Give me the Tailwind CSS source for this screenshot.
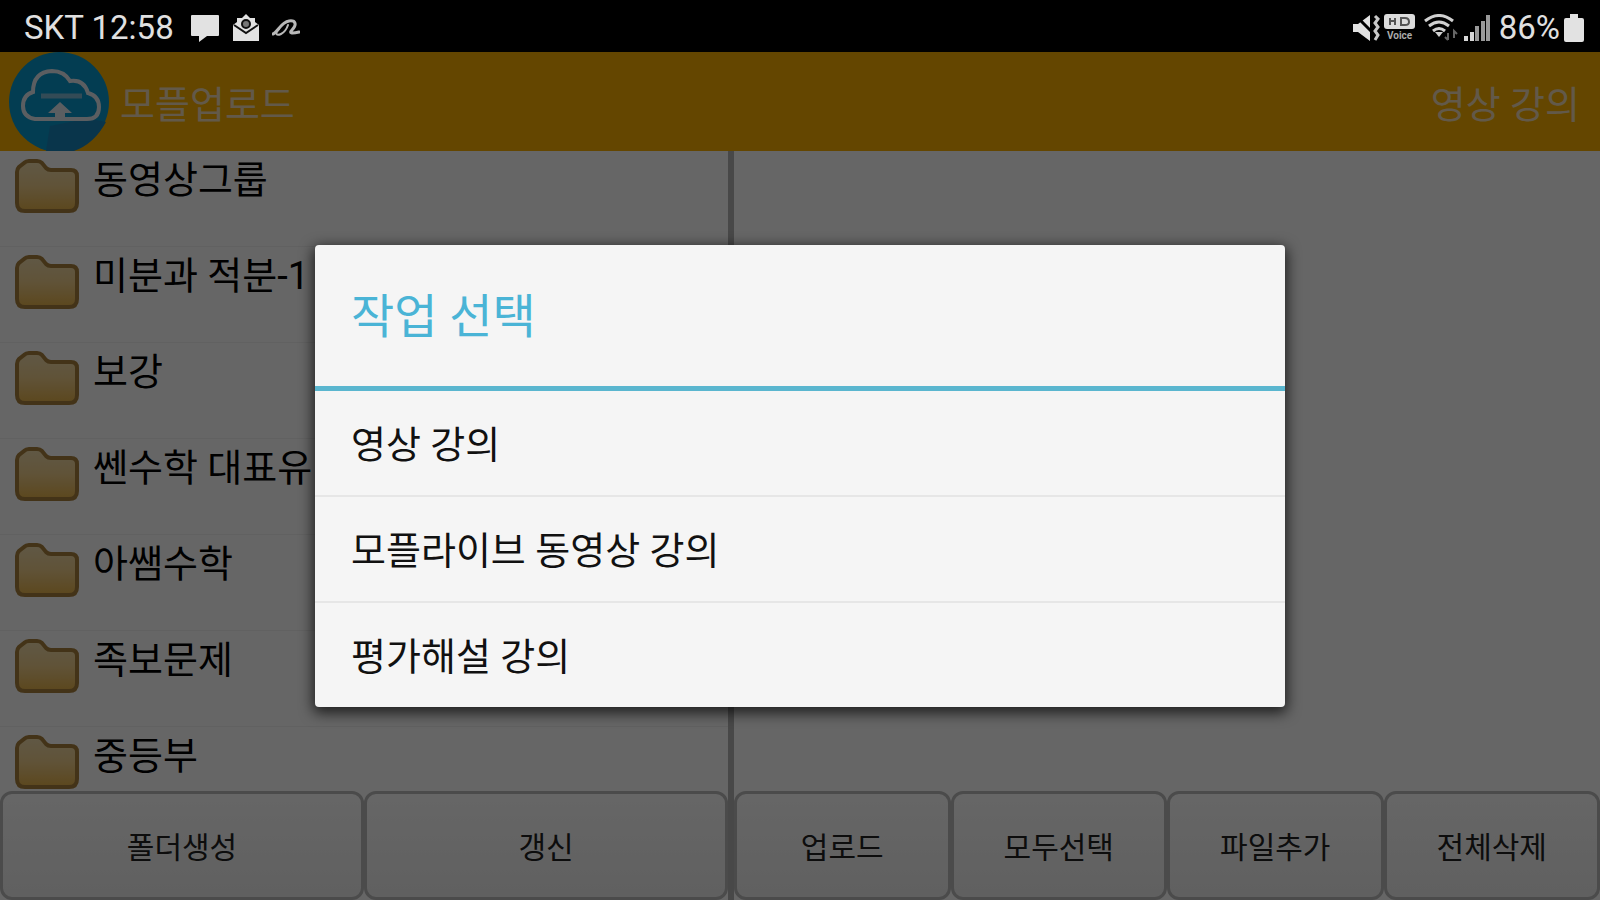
<!doctype html>
<html lang="ko">
  <head>
    <meta charset="UTF-8" />
    <meta name="viewport" content="width=device-width, initial-scale=1.0" />
    <title>모플업로드</title>
    <script src="https://cdn.jsdelivr.net/npm/@tailwindcss/browser@4"></script>
  </head>
  <body class="flex flex-col h-screen overflow-hidden bg-black font-[Roboto,'Noto_Sans_CJK_KR',sans-serif]">
    <!-- icons shared by the rows -->
    <svg class="absolute w-0 h-0">
      <defs>
        <linearGradient id="folder-fill" x1="0" y1="0" x2="0" y2="1">
          <stop offset="0" stop-color="#f0dcae" />
          <stop offset="0.5" stop-color="#f0cf8c" />
          <stop offset="1" stop-color="#e6b24a" />
        </linearGradient>
        <symbol id="folder" viewBox="0 0 64 54">
          <path
            d="M2 44V13Q2 10 4 8L9 4Q11 2 14 2H22Q25 2 27 4L31 9Q33 11 36 11H56Q62 11 62 17V44Q62 52 54 52H10Q2 52 2 44Z"
            fill="url(#folder-fill)"
            stroke="#a8803c"
            stroke-width="4"
          />
        </symbol>
      </defs>
    </svg>

    <div class="flex items-center justify-between h-[52px] shrink-0 pt-1 pl-6 pr-4 text-[#e0e0e0] text-[33px]">
      <div class="flex items-center gap-3">
        <span class="mr-1">SKT 12:58</span>
        <svg class="w-[30px] h-7" viewBox="0 0 30 28" fill="#e2e2e2">
          <path d="M2 1H28Q29 1 29 2V21Q29 22 28 22H17L9 28V22H2Q1 22 1 21V2Q1 1 2 1Z" />
        </svg>
        <svg class="w-7 h-7" viewBox="0 0 28 28">
          <path d="M1 11L5 8V4H10L14 0L18 4H23V8L27 11V27H1Z" fill="#e2e2e2" />
          <path d="M2 11L14 19L26 11" fill="none" stroke="#111" stroke-width="2" />
          <circle cx="14" cy="10" r="4" fill="#777" stroke="#111" stroke-width="2" />
        </svg>
        <svg class="w-7 h-7" viewBox="0 0 28 28" fill="none" stroke="#b8b8b8" stroke-width="2" stroke-linecap="round">
          <path d="M1 20C6 18 9 8 17 7C24 6 25 11 20 16C17 19 19 20 27 18" stroke-width="3" />
          <path d="M7 15C2 20 5 22 9 20C13 18 15 14 16 11" />
        </svg>
      </div>
      <div class="flex items-center gap-1">
        <svg class="w-7 h-7" viewBox="0 0 28 28" fill="#e2e2e2">
          <path d="M1 10H6L18 1V27L6 18H1Z" />
          <path d="M2 0L19 17" stroke="#000" stroke-width="3" />
          <path d="M23 2L26 5L23 9L26 13L23 17L26 21L23 26" fill="none" stroke="#c8c8c8" stroke-width="3" />
        </svg>
        <svg class="w-[31px] h-8 overflow-visible" viewBox="0 0 31 32">
          <rect x="0" y="2" width="31" height="15" rx="3" fill="#dcdcdc" />
          <path d="M6 6V13M6 9H11M11 6V13M17 6V13H21Q25 13 25 10Q25 6 21 6Z" fill="none" stroke="#555" stroke-width="2" />
          <text x="3" y="27" font-size="10" font-weight="700" fill="#aaa">Voice</text>
        </svg>
        <svg class="w-9 h-7 ml-1" viewBox="0 0 36 28" fill="none" stroke="#d0d0d0" stroke-width="3">
          <path d="M2 7Q16 -4 30 7M6 12Q16 4 26 12M10 17Q16 12 22 17" />
          <path d="M12 18H20L16 23Z" fill="#d0d0d0" stroke="none" />
          <path d="M25 19V26M22 23L25 26M31 24V17L34 20" stroke="#666" stroke-width="2" />
        </svg>
        <svg class="w-7 h-7" viewBox="0 0 28 28">
          <path d="M1 22H5V27H1ZM7 18H11V27H7Z" fill="#d8d8d8" />
          <path d="M12 12H16V27H12ZM18 7H22V27H18ZM23 1H27V27H23Z" fill="#999" />
        </svg>
        <span class="ml-1">86%</span>
        <svg class="w-5 h-7" viewBox="0 0 20 28" fill="#e2e2e2">
          <path d="M6 0H14V4H18Q20 4 20 6V26Q20 28 18 28H2Q0 28 0 26V6Q0 4 2 4H6Z" />
        </svg>
      </div>
    </div>

    <div class="relative flex flex-col flex-1 min-h-0 bg-white">
      <header class="flex items-center justify-between h-[99px] shrink-0 pl-2 pr-5 bg-[#fab000] text-[38px] text-[#f4deb8]">
        <div class="flex items-center gap-[10px]">
          <svg class="w-[102px] h-[99px]" viewBox="0 0 102 99">
            <circle cx="51" cy="50" r="50" fill="#0898cc" />
            <path d="M38 99L42 74L72 68H88L98 70Q86 92 66 99Z" fill="#1884bc" />
            <path
              d="M27 67Q15 65 15 54Q15 43 25 40Q25 20 44 19Q56 19 62 29Q76 27 80 41Q91 44 91 55Q91 67 79 67Z"
              fill="none"
              stroke="#e4ecf2"
              stroke-width="4"
            />
            <path d="M33 44H74" stroke="#80bcd8" stroke-width="5" />
            <path d="M52 50L64 61H57V67H47V61H40Z" fill="#e4ecf2" />
          </svg>
          <h1 class="pt-2">모플업로드</h1>
        </div>
        <span class="pt-2">영상 강의</span>
      </header>

      <main class="flex flex-1 min-h-0">
        <section class="flex flex-col w-[45.5%] min-h-0">
          <ul class="flex-1 min-h-0 overflow-hidden text-[38px] leading-[58px] text-black">
            <li class="flex items-start gap-[14px] h-24 pl-[15px] border-b border-[#f2f2f2]">
              <svg class="w-16 h-[54px] mt-2"><use href="#folder" /></svg>동영상그룹
            </li>
            <li class="flex items-start gap-[14px] h-24 pl-[15px] border-b border-[#f2f2f2]">
              <svg class="w-16 h-[54px] mt-2"><use href="#folder" /></svg>미분과 적분-1
            </li>
            <li class="flex items-start gap-[14px] h-24 pl-[15px] border-b border-[#f2f2f2]">
              <svg class="w-16 h-[54px] mt-2"><use href="#folder" /></svg>보강
            </li>
            <li class="flex items-start gap-[14px] h-24 pl-[15px] border-b border-[#f2f2f2]">
              <svg class="w-16 h-[54px] mt-2"><use href="#folder" /></svg>쎈수학 대표유
            </li>
            <li class="flex items-start gap-[14px] h-24 pl-[15px] border-b border-[#f2f2f2]">
              <svg class="w-16 h-[54px] mt-2"><use href="#folder" /></svg>아쌤수학
            </li>
            <li class="flex items-start gap-[14px] h-24 pl-[15px] border-b border-[#f2f2f2]">
              <svg class="w-16 h-[54px] mt-2"><use href="#folder" /></svg>족보문제
            </li>
            <li class="flex items-start gap-[14px] h-24 pl-[15px]">
              <svg class="w-16 h-[54px] mt-2"><use href="#folder" /></svg>중등부
            </li>
          </ul>
          <div class="flex h-[109px] shrink-0 text-[30px] text-[#222]">
            <button class="flex-1 pt-1 border-3 border-[#bbb] rounded-xl bg-linear-to-b from-white to-[#f0f0f0]">폴더생성</button>
            <button class="flex-1 pt-1 border-3 border-[#bbb] rounded-xl bg-linear-to-b from-white to-[#f0f0f0]">갱신</button>
          </div>
        </section>

        <div class="w-[6px] bg-[#b4b4b4]"></div>

        <section class="flex flex-col flex-1 justify-end">
          <div class="flex h-[109px] shrink-0 text-[30px] text-[#222]">
            <button class="flex-1 pt-1 border-3 border-[#bbb] rounded-xl bg-linear-to-b from-white to-[#f0f0f0]">업로드</button>
            <button class="flex-1 pt-1 border-3 border-[#bbb] rounded-xl bg-linear-to-b from-white to-[#f0f0f0]">모두선택</button>
            <button class="flex-1 pt-1 border-3 border-[#bbb] rounded-xl bg-linear-to-b from-white to-[#f0f0f0]">파일추가</button>
            <button class="flex-1 pt-1 border-3 border-[#bbb] rounded-xl bg-linear-to-b from-white to-[#f0f0f0]">전체삭제</button>
          </div>
        </section>
      </main>

      <!-- dimmed backdrop with the dialog -->
      <div class="absolute inset-0 flex items-center justify-center bg-black/60">
        <div
          role="dialog"
          aria-labelledby="dialog-title"
          class="w-[970px] max-w-full rounded-sm bg-[#f5f5f5] shadow-[0_4px_14px_2px_rgba(0,0,0,0.7)]"
        >
          <h2 id="dialog-title" class="flex items-center h-[146px] pt-1 px-9 border-b-5 border-[#5ab6cf] text-[47px] text-[#4ab4d6]">작업 선택</h2>
          <div class="flex flex-col text-[38px] text-[#111] divide-y-2 divide-[#e6e6e6]">
            <button class="h-[106px] pt-1 px-9 text-left">영상 강의</button>
            <button class="h-[106px] pt-1 px-9 text-left">모플라이브 동영상 강의</button>
            <button class="h-[104px] pt-1 px-9 text-left">평가해설 강의</button>
          </div>
        </div>
      </div>
    </div>
  </body>
</html>
